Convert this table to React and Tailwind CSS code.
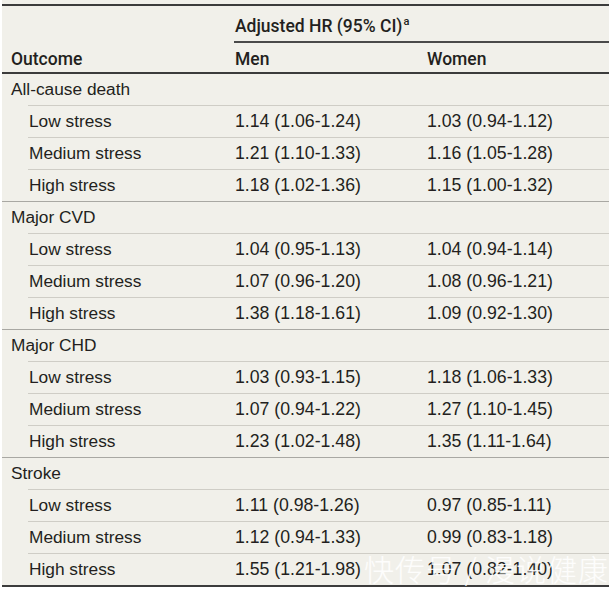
import React from "react";

const groups = [
  {
    name: "All-cause death",
    rows: [
      ["Low stress", "1.14 (1.06-1.24)", "1.03 (0.94-1.12)"],
      ["Medium stress", "1.21 (1.10-1.33)", "1.16 (1.05-1.28)"],
      ["High stress", "1.18 (1.02-1.36)", "1.15 (1.00-1.32)"],
    ],
  },
  {
    name: "Major CVD",
    rows: [
      ["Low stress", "1.04 (0.95-1.13)", "1.04 (0.94-1.14)"],
      ["Medium stress", "1.07 (0.96-1.20)", "1.08 (0.96-1.21)"],
      ["High stress", "1.38 (1.18-1.61)", "1.09 (0.92-1.30)"],
    ],
  },
  {
    name: "Major CHD",
    rows: [
      ["Low stress", "1.03 (0.93-1.15)", "1.18 (1.06-1.33)"],
      ["Medium stress", "1.07 (0.94-1.22)", "1.27 (1.10-1.45)"],
      ["High stress", "1.23 (1.02-1.48)", "1.35 (1.11-1.64)"],
    ],
  },
  {
    name: "Stroke",
    rows: [
      ["Low stress", "1.11 (0.98-1.26)", "0.97 (0.85-1.11)"],
      ["Medium stress", "1.12 (0.94-1.33)", "0.99 (0.83-1.18)"],
      ["High stress", "1.55 (1.21-1.98)", "1.07 (0.82-1.40)"],
    ],
  },
];

function Row({ label, men, women, sub }) {
  return (
    <div className="grid grid-cols-[233px_192px_1fr] h-[31px] items-center pb-[2px]">
      <div className={sub ? "pl-[27px] text-[17.3px]" : "pl-[9px] text-[17.3px]"}>{label}</div>
      <div className="text-[17.7px]">{men}</div>
      <div className="text-[17.7px]">{women}</div>
    </div>
  );
}

export default function App() {
  return (
    <div className="relative w-[612px] h-[590px] bg-white">
      <div
        className="ml-[2px] w-[607px] bg-[#f1f0ea] pt-[4px] text-[#231f20] leading-[20px]"
        style={{ fontFamily: '"Liberation Sans", Arial, sans-serif' }}
      >
        <div className="h-[2px] bg-[#3c3c3c]" />
        <div className="grid grid-cols-[232px_1fr] pt-[10px]">
          <div />
          <div
            className="h-[27px] border-b-2 border-[#4a4a4a] pl-[1px] text-[17.5px] font-medium"
            style={{ fontFamily: 'Roboto, "Liberation Sans", sans-serif' }}
          >
            Adjusted HR (95% CI)
            <span className="text-[11px] leading-none relative top-[-7px] ml-[1px]">a</span>
          </div>
        </div>
        <div
          className="grid grid-cols-[233px_192px_1fr] h-[29px] pt-[6px] text-[17.5px] font-medium"
          style={{ fontFamily: 'Roboto, "Liberation Sans", sans-serif' }}
        >
          <div className="pl-[9px]">Outcome</div>
          <div>Men</div>
          <div>Women</div>
        </div>
        <div className="h-[2px] bg-[#3c3c3c]" />
        {groups.map((g, gi) => (
          <div key={g.name}>
            <Row label={g.name} men="" women="" />
            <div className="ml-[26px] h-px bg-[#cfcdc6]" />
            {g.rows.map((r, ri) => (
              <div key={r[0]}>
                <Row label={r[0]} men={r[1]} women={r[2]} sub />
                {ri < 2 ? (
                  <div className="ml-[26px] h-px bg-[#cfcdc6]" />
                ) : gi < groups.length - 1 ? (
                  <div className="h-px bg-[#a9a8a3]" />
                ) : (
                  <div className="h-[2px] bg-[#3c3c3c]" />
                )}
              </div>
            ))}
          </div>
        ))}
      </div>
      <div
        className="absolute left-[364px] top-[551px] text-[30px] leading-[34px] text-white/85 font-light tracking-[1px] whitespace-nowrap"
        style={{ fontFamily: '"Noto Sans CJK SC", sans-serif' }}
      >
        快传号 / 漫说健康
      </div>
    </div>
  );
}
